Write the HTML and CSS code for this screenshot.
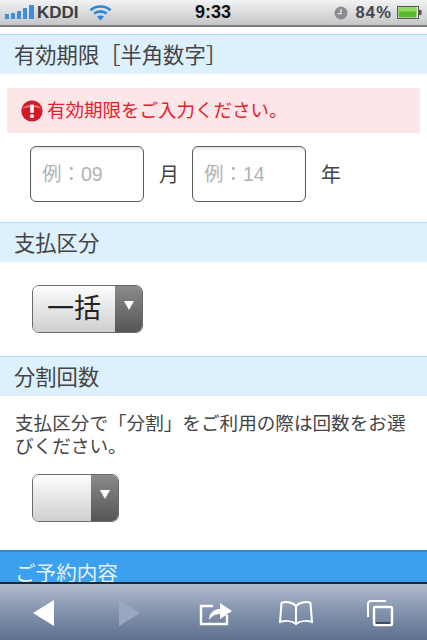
FILE: index.html
```html
<!DOCTYPE html>
<html lang="ja">
<head>
<meta charset="utf-8">
<title>有効期限</title>
<link rel="stylesheet" href="styles.css">
</head>
<body>
<div class="phone">
  <header class="status">
    <div class="status-left">
      <svg class="signal" width="30" height="15" viewBox="0 0 30 15"><g fill="#3f8fd8"><rect x="0" y="9" width="4" height="5"/><rect x="6" y="8" width="4" height="6"/><rect x="12" y="6" width="4" height="8"/><rect x="18" y="3" width="4" height="11"/><rect x="24" y="0" width="5" height="14"/></g></svg>
      <span class="carrier">KDDI</span>
      <svg class="wifi" width="23" height="17" viewBox="0 0 23 17"><g fill="none" stroke="#2f86d6" stroke-width="2.6"><path d="M1.5 6.2C7 1.2 16 1.2 21.5 6.2"/><path d="M5.2 9.6C8.8 6.6 14.2 6.6 17.8 9.6"/></g><path d="M8 12.6C10 11 13 11 15 12.6L11.5 16.5Z" fill="#2f86d6"/></svg>
    </div>
    <div class="clock">9:33</div>
    <div class="status-right">
      <svg width="14" height="14" viewBox="0 0 14 14"><circle cx="7" cy="7" r="6.5" fill="#8b8d90"/><path d="M7 3V7.6H3.6" fill="none" stroke="#e8e8e8" stroke-width="1.3"/></svg>
      <span class="percent">84%</span>
      <svg width="25" height="13" viewBox="0 0 25 13"><rect x="0.5" y="0.5" width="21" height="12" fill="#eef0ee" stroke="#555"/><rect x="1.5" y="1.5" width="18" height="10" fill="#58b82c"/><rect x="1.5" y="1.5" width="18" height="4" fill="#8fda5e"/><rect x="22" y="4" width="2.5" height="5" fill="#555"/></svg>
    </div>
  </header>

  <main class="content">
    <h2 class="section first">有効期限［半角数字］</h2>
    <div class="error">
      <svg class="error-icon" width="22" height="22" viewBox="0 0 22 22"><circle cx="11" cy="11" r="10.6" fill="#d3182a"/><path d="M1.5 9C3 3.5 19 3.5 20.5 9C15 6.5 7 6.5 1.5 9Z" fill="#ee6a70"/><rect x="9.2" y="4.5" width="3.6" height="8.5" rx="1.2" fill="#fff"/><circle cx="11" cy="16.2" r="2" fill="#fff"/></svg>
      <span class="error-text">有効期限をご入力ください。</span>
    </div>
    <div class="date-row">
      <input class="field" type="text" placeholder="例：09">
      <span class="unit month">月</span>
      <input class="field" type="text" placeholder="例：14">
      <span class="unit">年</span>
    </div>

    <h2 class="section pay">支払区分</h2>
    <div class="select wide">
      <span class="select-value">一括</span>
      <span class="select-arrow"><i class="tri"></i></span>
    </div>

    <h2 class="section split">分割回数</h2>
    <p class="note">支払区分で「分割」をご利用の際は回数をお選びください。</p>
    <div class="select narrow">
      <span class="select-value"></span>
      <span class="select-arrow"><i class="tri"></i></span>
    </div>

    <h2 class="banner">ご予約内容</h2>
  </main>

  <nav class="toolbar">
    <svg class="tool-back" width="26" height="28" viewBox="0 0 26 28"><path d="M1 14L22 1V27Z" fill="#fff"/></svg>
    <svg class="tool-forward" width="24" height="28" viewBox="0 0 24 28"><path d="M23 14L2 1V27Z" fill="#9aa8bf"/></svg>
    <svg class="tool-share" width="34" height="28" viewBox="0 0 34 28"><path d="M14 7H2V25H28V16" fill="none" stroke="#fff" stroke-width="2.4"/><path d="M10 21C10 14 15 10 21 10V4L33 12L21 20V15C16 15 13 17 10 21Z" fill="#fff"/></svg>
    <svg class="tool-book" width="34" height="26" viewBox="0 0 34 26"><g fill="none" stroke="#fff" stroke-width="2"><path d="M17 6C13 1.500 6 1.500 2.500 3L1 22C6 20.500 13 20.500 17 24C21 20.500 28 20.500 33 22L31.500 3C28 1.500 21 1.500 17 6Z"/><path d="M17 6V24"/></g></svg>
    <svg class="tool-tabs" width="28" height="28" viewBox="0 0 28 28"><g fill="none"><path d="M20 2H5Q2 2 2 5V18" stroke="#fff" stroke-width="2"/><rect x="8" y="8" width="18" height="18" rx="1.500" stroke="#fff" stroke-width="2.4"/><path d="M10 24H24" stroke="#2d3440" stroke-width="1.500"/></g></svg>
  </nav>
</div>
</body>
</html>
```

FILE: styles.css
```css
* { box-sizing: border-box; }

html, body {
  margin: 0;
  padding: 0;
}

body {
  font-family: "Noto Sans CJK JP", "Liberation Sans", sans-serif;
  color: #444;
  background: #fff;
}

.phone {
  width: 427px;
  height: 640px;
  display: flex;
  flex-direction: column;
  overflow: hidden;
}

.status {
  flex: none;
  height: 27px;
  padding: 0 5px;
  display: grid;
  grid-template-columns: 1fr auto 1fr;
  align-items: center;
  background: linear-gradient(#f0f2f3, #c4c6c8);
  border-bottom: 2px solid #77797b;
  font-family: "Liberation Sans", sans-serif;
  font-weight: 700;
}

.status-left, .status-right {
  display: flex;
  align-items: center;
}

.status-right {
  justify-content: flex-end;
  gap: 7px;
}

.carrier {
  font-size: 17px;
  margin-left: 2px;
  color: #3b3e42;
}

.wifi { margin-left: 10px; }

.clock {
  font-size: 18px;
  color: #111;
  margin-left: -1px;
}

.percent {
  font-size: 16.500px;
  letter-spacing: 1.200px;
  color: #45484c;
  margin-right: -2px;
}

.content {
  flex: 1;
  min-height: 0;
  overflow: hidden;
  padding-top: 7px;
}

.section {
  margin: 0;
  height: 40px;
  padding: 0 14px;
  font-size: 21.300px;
  font-weight: 400;
  line-height: 38px;
  color: #444;
  background: #dcf0fd;
  border-top: 1px solid #b0dcf2;
}

.error {
  margin: 14px 7px 0;
  height: 45px;
  padding-left: 14px;
  display: flex;
  align-items: center;
  gap: 4px;
  font-size: 18.500px;
  color: #e3212f;
  background: #fde6e8;
}

.error-icon { flex: none; }

.error-text { margin-top: -4px; }

.date-row {
  margin-top: 13px;
  padding-left: 30px;
  display: flex;
  align-items: center;
}

.field {
  width: 114px;
  height: 56px;
  padding: 0 11px;
  border: 1.500px solid #5c5c5c;
  border-radius: 6px;
  font-family: "Liberation Sans", "Noto Sans CJK JP", sans-serif;
  font-size: 19.500px;
  background: #fff;
  box-shadow: inset 0 2px 2px #e4e4e4;
  outline: none;
}

.field::placeholder { color: #b2b2b2; }

.unit {
  margin: -2px 0 0 15px;
  font-size: 20px;
  color: #444;
}

.month { width: 33px; }

.pay { margin-top: 20px; }

.split { margin-top: 23px; }

.select {
  margin: 23px 0 0 32px;
  height: 48px;
  display: flex;
  overflow: hidden;
  border: 1.500px solid #6b6b6b;
  border-radius: 7px;
}

.wide { width: 111px; }

.narrow {
  width: 87px;
  margin-top: 18px;
}

.select-value {
  flex: 1;
  font-size: 27px;
  line-height: 41px;
  text-align: center;
  color: #222;
  background: linear-gradient(#fdfdfd, #cfcfcf);
}

.select-arrow {
  flex: none;
  width: 27px;
  display: flex;
  justify-content: center;
  padding-top: 15px;
  background: linear-gradient(#8a8a8a, #565656);
}

.tri {
  width: 0;
  height: 0;
  border-left: 5px solid transparent;
  border-right: 5px solid transparent;
  border-top: 9px solid #fff;
}

.note {
  margin: 14px 14px 0 15px;
  font-size: 18.600px;
  line-height: 23px;
  color: #444;
}

.banner {
  margin: 28px 0 0;
  height: 35px;
  padding: 5px 15px 0;
  font-size: 20.600px;
  font-weight: 400;
  line-height: 30px;
  color: #e4f2fc;
  background: #3ba0ee;
  border-top: 2px solid #2a8cd0;
}

.toolbar {
  flex: none;
  height: 58px;
  padding: 2px 0 0 32px;
  display: flex;
  align-items: center;
  background: linear-gradient(#b3bccd, #8796af 45%, #5f7190);
  border-top: 2px solid #22262e;
}

.tool-forward { margin-left: 59px; }
.tool-share { margin-left: 58px; }
.tool-book { margin-left: 46px; }
.tool-tabs { margin-left: 53px; }
```
